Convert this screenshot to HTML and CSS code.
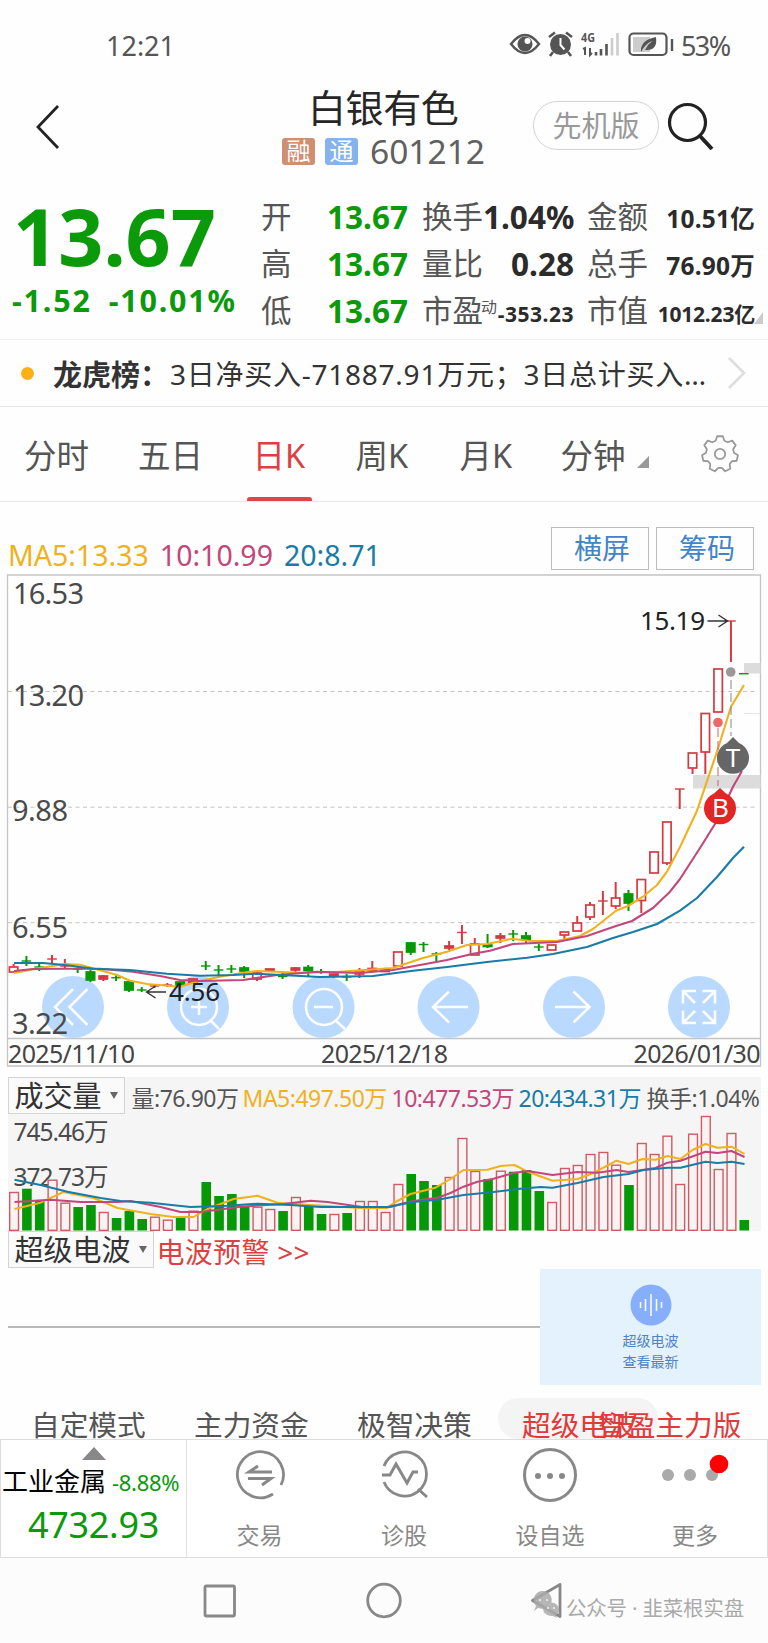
FILE: index.html
```html
<!DOCTYPE html>
<html lang="zh-CN">
<head>
    <meta charset="UTF-8">
    <meta name="viewport" content="width=device-width, initial-scale=1.0">
    <title>白银有色 601212</title>
    <link rel="stylesheet" href="styles.css">
</head>
<body>
    <div class="status">
        <span class="clock">12:21</span>
        <svg class="status-icons" width="166" height="28" viewBox="508 30 166 28">
            <path d="M511 44 Q525 26 539 44 Q525 62 511 44Z" fill="none" stroke="#555" stroke-width="2.4"/>
            <circle cx="525" cy="44" r="7.5" fill="#555"/><circle cx="527.5" cy="41" r="3" fill="#fff"/>
            <circle cx="560.500" cy="44.500" r="10.500" fill="#555"/>
            <path d="M549 37l6-4.500M572 37l-6-4.500M553 52l-3 4M568 52l3 4" stroke="#555" stroke-width="2.600" fill="none"/>
            <path d="M560.500 38v7l4 4.500" stroke="#fff" stroke-width="2" fill="none"/>
            <text x="581" y="42" font-size="13" font-weight="bold" fill="#555" textLength="14" lengthAdjust="spacingAndGlyphs">4G</text>
            <path d="M583 49l2-1v7M590 48v7l2-2" stroke="#555" stroke-width="2" fill="none"/>
            <path d="M596 52v3.500M601 49v6.500M606.500 44v11.500" stroke="#555" stroke-width="2.600"/>
            <path d="M612 38v17.500M617.500 33v22.500" stroke="#ccc" stroke-width="2.600"/>
            <rect x="629.500" y="33.500" width="37" height="21.500" rx="4" fill="#fff" stroke="#555" stroke-width="2.200"/>
            <path d="M633 37h17v15h-17z" fill="#ccc"/>
            <path d="M641 52q-1-12 15-15q2 14-11 13q3-6 7-9q-7 3-11 11z" fill="#555"/>
            <path d="M672 39v12" stroke="#555" stroke-width="2.400"/>
        </svg>
        <span class="battery">53%</span>
    </div>

    <div class="header">
        <svg class="back" width="26" height="46" viewBox="0 0 26 46"><path d="M23 2L3 23L23 44" fill="none" stroke="#222" stroke-width="2.800"/></svg>
        <div class="stock">
            <h1>白银有色</h1>
            <div class="code"><i class="tag rong">融</i><i class="tag tong">通</i><span>601212</span></div>
        </div>
        <div class="edition">先机版</div>
        <svg class="search" width="50" height="50" viewBox="0 0 50 50"><circle cx="20.500" cy="20.500" r="18" fill="none" stroke="#222" stroke-width="3.200"/><path d="M32.500 33.500L45 47" stroke="#222" stroke-width="4"/></svg>
    </div>

    <div class="quote">
        <div class="price">
            <div class="last">13.67</div>
            <div class="change"><span>-1.52</span><span>-10.01%</span></div>
        </div>
        <div class="pairs first">
            <div><span>开</span><b>13.67</b></div>
            <div><span>高</span><b>13.67</b></div>
            <div><span>低</span><b>13.67</b></div>
        </div>
        <div class="pairs second">
            <div><span>换手</span><b>1.04%</b></div>
            <div><span>量比</span><b>0.28</b></div>
            <div><span>市盈<sup>动</sup></span><b class="small">-353.23</b></div>
        </div>
        <div class="pairs third">
            <div><span>金额</span><b>10.51亿</b></div>
            <div><span>总手</span><b>76.90万</b></div>
            <div><span>市值</span><b class="small">1012.23亿</b></div>
        </div>
        <i class="corner"></i>
    </div>

    <div class="notice">
        <i class="dot"></i><b>龙虎榜：</b><span>3日净买入-71887.91万元；3日总计买入…</span>
        <svg width="20" height="34" viewBox="0 0 20 34"><path d="M2 2L17 17L2 32" fill="none" stroke="#ddd" stroke-width="2.600"/></svg>
    </div>

    <div class="tabs">
        <span>分时</span><span>五日</span><span class="active">日K</span><span>周K</span><span>月K</span><span class="minute">分钟<i></i></span>
        <svg width="40" height="40" viewBox="-20 -20 40 40"><path id="gear" fill="none" stroke="#999" stroke-width="1.800" stroke-linejoin="round"/><circle r="5.200" fill="none" stroke="#999" stroke-width="1.800"/></svg>
    </div>

    <div class="ma-row">
        <span class="ma5">MA5:13.33</span><span class="ma10">10:10.99</span><span class="ma20">20:8.71</span>
        <button>横屏</button><button>筹码</button>
    </div>

    <svg class="kline" id="kline" width="768" height="496" viewBox="0 574 768 496">
        <g fill="none" stroke="#c4c4c4">
            <path d="M7.500 575H760.500V1066H7.500ZM7.500 1038.500H760.500" stroke-width="1.300"/>
            <path d="M8 691.500H757M8 807.200H757M8 922.700H757" stroke-dasharray="4 3.500"/>
            <path d="M744 713.500H760" stroke="#e4e4e4"/>
        </g>
        <g fill="#dcdcdc"><rect x="744" y="663" width="16.500" height="10.500"/><rect x="693" y="775" width="67.500" height="13.500"/></g>
        <g fill="#b9d9fe"><circle cx="73" cy="1007" r="31"/><circle cx="198" cy="1007" r="31"/><circle cx="323.500" cy="1007" r="31"/><circle cx="448.500" cy="1007" r="31"/><circle cx="574" cy="1007" r="31"/><circle cx="699" cy="1007" r="31"/></g>
        <g fill="none" stroke="#fff" stroke-width="2.500">
            <path d="M73 989L55 1007L73 1025M87.500 989L69.500 1007L87.500 1025"/>
            <circle cx="199" cy="1007" r="18"/><path d="M191 1007h16M199 999v16M210 1020l9 9"/>
            <circle cx="324" cy="1007" r="18"/><path d="M314 1007h19M335 1020l10 9"/>
            <path d="M468 1007H433M449 991.500L433 1007L449 1022.500"/>
            <path d="M555 1007H590M573.500 991.500L589.500 1007L573.500 1022.500"/>
            <path d="M695 1003L683 991M683 1003.500V991H696M703 1003L715 991M702.500 991H715V1003.500M695 1011L683 1023M683 1010.500V1023H696M703 1011L715 1023M702.500 1023H715V1010.500"/>
        </g>
        <g id="candles"></g>
        <g id="kMa" fill="none" stroke-width="2.100" stroke-linejoin="round"></g>
        <g fill="#4a4a4a" font-size="29">
            <text x="13" y="604" textLength="71">16.53</text>
            <text x="13" y="706" textLength="71">13.20</text>
            <text x="12" y="821" textLength="56">9.88</text>
            <text x="12" y="938" textLength="56">6.55</text>
            <text x="12" y="1034" textLength="56">3.22</text>
        </g>
        <g fill="#444" font-size="25">
            <text x="8" y="1063" textLength="127">2025/11/10</text>
            <text x="321" y="1063" textLength="127">2025/12/18</text>
            <text x="633.500" y="1063" textLength="127">2026/01/30</text>
        </g>
        <g fill="#222" font-size="26">
            <text x="169" y="1001" textLength="51">4.56</text>
            <text x="640" y="630" textLength="65">15.19</text>
        </g>
        <path d="M166 992H146.500M155.500 986L146.500 992L155.500 998M707.500 621H727M718.500 615L727.500 621L718.500 627" fill="none" stroke="#333" stroke-width="1.400"/>
        <path d="M731 680V736" stroke="#888" stroke-dasharray="9 4"/>
        <path d="M718 728V786" stroke="#c66" stroke-dasharray="9 4"/>
        <circle cx="730.700" cy="672" r="4.800" fill="#999"/><circle cx="718" cy="722.500" r="4.800" fill="#ee6868"/>
        <path d="M733 737L739 743A16 16 0 1 1 727 743Z" fill="#666"/>
        <path d="M720 788L726 793.500A16 16 0 1 1 714 793.500Z" fill="#e22626"/>
        <g fill="#fff" font-size="26" text-anchor="middle"><text x="733" y="767">T</text><text x="720.500" y="817">B</text></g>
    </svg>

    <div class="volume">
        <div class="vol-head">
            <div class="select">成交量<i></i></div>
            <span class="v0">量:76.90万</span><span class="v1 ma5">MA5:497.50万</span><span class="v2 ma10">10:477.53万</span><span class="v3 ma20">20:434.31万</span><span class="v4">换手:1.04%</span>
        </div>
        <svg width="753" height="118" viewBox="7.500 1113 753 118">
            <g fill="#4a4a4a" font-size="24.500"><text x="13" y="1140.500" textLength="95">745.46万</text><text x="13" y="1186" textLength="95">372.73万</text></g>
            <g id="bars"></g>
            <g id="vMa" fill="none" stroke-width="2" stroke-linejoin="round"></g>
        </svg>
    </div>

    <div class="wave">
        <div class="wave-head"><div class="select">超级电波<i></i></div><span>电波预警 &gt;&gt;</span></div>
        <div class="wave-body">
            <div class="axis"></div>
            <div class="wave-card">
                <svg width="42" height="42" viewBox="-21 -21 42 42"><circle r="20.500" fill="#87aefb"/><path d="M-10.500-3V3M-5.500-6V6M0-11V11M5.500-6V6M10.500-3V3" stroke="#fff" stroke-width="1.500"/></svg>
                <span>超级电波</span><span>查看最新</span>
            </div>
        </div>
    </div>

    <div class="modes">
        <span>自定模式</span><span>主力资金</span><span>极智决策</span><span class="on">超级电波</span><span class="overlap">智盈主力版</span>
    </div>

    <div class="bottom">
        <div class="sector">
            <i></i>
            <div class="name">工业金属<span>-8.88%</span></div>
            <div class="value">4732.93</div>
        </div>
        <div class="item trade">
            <svg width="60" height="60" viewBox="-30 -30 60 60"><path d="M13 19A23 23 0 1 1 21 10" fill="none" stroke="#888" stroke-width="2.800"/><path d="M-2-9L-11-3H12M-12 3.500H11L2 10" fill="none" stroke="#888" stroke-width="3"/></svg>
            <span>交易</span>
        </div>
        <div class="item diagnose">
            <svg width="60" height="60" viewBox="-30 -30 60 60"><path d="M-20-9A22 22 0 1 1-20 7" fill="none" stroke="#888" stroke-width="2.800"/><path d="M-22 0H-14L-8-11L3 8L9-3H14M14 14L23 22" fill="none" stroke="#888" stroke-width="3"/></svg>
            <span>诊股</span>
        </div>
        <div class="item choose">
            <svg width="60" height="60" viewBox="-30 -30 60 60"><circle r="25.500" fill="none" stroke="#888" stroke-width="3"/><g fill="#888"><circle cx="-12" cy="1" r="3"/><circle cy="1" r="3"/><circle cx="12" cy="1" r="3"/></g></svg>
            <span>设自选</span>
        </div>
        <div class="item more">
            <svg width="70" height="60" viewBox="-35 -30 70 60"><g fill="#aaa"><circle cx="-27" r="6"/><circle cx="-5" r="6"/><circle cx="17" r="6"/></g><circle cx="24" cy="-11" r="9.300" fill="#f00"/></svg>
            <span>更多</span>
        </div>
    </div>

    <div class="navbar">
        <svg width="566" height="50" viewBox="0 1575 566 50">
            <g fill="none" stroke="#888" stroke-width="2.800" stroke-linejoin="round">
                <rect x="205" y="1586" width="29.500" height="30" rx="1.500"/>
                <circle cx="384" cy="1600.500" r="16.300"/>
                <path d="M560 1584.500L532.500 1600.500L560 1616.500Z"/>
            </g>
            <g fill="#aaa" opacity=".85">
                <path d="M534 1611l2-5a9 9 0 1 1 7 3l-5-1z"/><path d="M543 1609a8 7 0 1 1 13 6l1 3-4-2a9 7 0 0 1-10-7z"/>
            </g>
            <g fill="#eee"><circle cx="540" cy="1600" r="1.100"/><circle cx="547" cy="1600" r="1.100"/><circle cx="548" cy="1608" r="1.100"/><circle cx="554" cy="1608" r="1.100"/></g>
        </svg>
        <span>公众号 · 韭菜根实盘</span>
    </div>

    <script src="chart.js"></script>
</body>
</html>
```
FILE: styles.css
```css
* {
    box-sizing: border-box;
}
body {
    margin: 0;
    width: 768px;
    height: 1643px;
    overflow: hidden;
    background: #fefefe;
    color: #555;
    font-family: "Noto Sans", "Noto Sans CJK SC", sans-serif;
    white-space: nowrap;
}
i {
    font-style: normal;
}
svg {
    display: block;
    flex: none;
}
.ma5 { color: #efb21f; }
.ma10 { color: #c2477a; }
.ma20 { color: #187ca6; }

/* Barra de estado */
.status {
    display: flex;
    align-items: center;
    height: 92px;
    padding: 0 40px 0 106px;
    font-size: 27px;
    line-height: 92px;
}
.status-icons { margin-left: auto; margin-top: -4px; }
.battery { margin-left: 7px; width: 47px; letter-spacing: -1.6px; }

.header {
    display: flex;
    height: 92px;
    position: relative;
}
.back { margin: 12px 0 0 35px; }
.stock { width: 205px; margin-left: 240px; margin-top: -9px; }
.stock h1 {
    margin: 0 0 0 7px;
    font-size: 38px;
    font-weight: normal;
    line-height: 48px;
    color: #262626;
    letter-spacing: -0.4px;
}
.code {
    display: flex;
    align-items: center;
    height: 40px;
    margin-left: -19px;
    font-size: 33.5px;
    line-height: 40px;
    color: #606060;
}
.tag {
    width: 33px;
    height: 27px;
    margin-right: 10px;
    border-radius: 3px;
    color: #fff;
    font-size: 24px;
    line-height: 26px;
    text-align: center;
}
.code .tong { margin-right: 12px; }
.rong { background: #d08e72; }
.tong { background: #86b3ef; }
.edition {
    width: 126px;
    height: 49px;
    margin: 9px 8px 0 27px;
    border: 1.5px solid #d2d2d2;
    border-radius: 25px;
    color: #999;
    font-size: 29px;
    line-height: 48px;
    text-align: center;
}
.search { margin-top: 10px; }

/* Cotización */
.quote {
    display: flex;
    position: relative;
    height: 156px;
    border-bottom: 1px solid #eee;
}
.price { width: 261px; color: #0a9a0a; font-weight: bold; }
.last {
    height: 96px;
    padding-left: 13px;
    font-size: 79px;
    line-height: 104px;
}
.change {
    display: flex;
    gap: 17px;
    padding-left: 12px;
    font-size: 30.5px;
    line-height: 40px;
    letter-spacing: 1.8px;
}
.pairs { padding-top: 9px; }
.pairs div {
    display: flex;
    justify-content: space-between;
    height: 47.2px;
    line-height: 47.2px;
    font-size: 30.5px;
}
.pairs b { font-size: 31.5px; color: #2b2b2b; }
.first { width: 147px; }
.pairs.first b { color: #0a9a0a; }
.second { width: 152px; margin-left: 14px; }
.third { width: 168px; margin-left: 13px; }
.third b { font-size: 24.5px; line-height: 51px; letter-spacing: 0.2px; }
.pairs b.small { font-size: 21px; line-height: 54px; letter-spacing: -0.2px; }
.pairs.second b.small { letter-spacing: 0.5px; }
.pairs sup {
    display: inline-block;
    width: 0;
    margin-left: -2px;
    font-size: 16px;
    line-height: 16px;
    vertical-align: 9px;
}
.corner {
    position: absolute;
    right: 5px;
    bottom: 15px;
    border-left: 9px solid transparent;
    border-bottom: 12px solid #ccc;
}

.notice {
    display: flex;
    align-items: center;
    height: 67px;
    padding-left: 21px;
    border-bottom: 1px solid #e8e8e8;
    font-size: 28px;
    color: #333;
}
.notice b { width: 117px; font-size: 29px; }
.notice span { width: 557px; letter-spacing: 0.75px; }
.dot {
    width: 13px;
    height: 13px;
    margin: 0 19px 0 0;
    border-radius: 50%;
    background: #fbb014;
}

.tabs {
    display: grid;
    grid-template-columns: 114px 107.500px 110px 104px 101px 139.500px 40px;
    align-items: center;
    height: 95px;
    padding: 0 0 0 24px;
    border-bottom: 1px solid #e8e8e8;
    font-size: 32.5px;
    line-height: 98px;
}
.tabs span { height: 95px; }
.tabs svg { margin-top: -2px; }
.tabs .active { color: #dd4040; position: relative; padding-left: 7px; }
.tabs .active::after {
    content: "";
    position: absolute;
    left: 1px;
    bottom: 1px;
    width: 65px;
    height: 4px;
    border-radius: 3px 3px 0 0;
    background: #dd4646;
}
.minute i {
    display: inline-block;
    margin-left: 11px;
    border-left: 12px solid transparent;
    border-bottom: 12px solid #999;
}

.ma-row {
    display: flex;
    height: 72px;
    padding: 25px 14px 0 8px;
    font-size: 28.5px;
    line-height: 56px;
}
.ma-row span { margin-right: 11px; }
.ma-row button {
    width: 98px;
    height: 43px;
    margin-left: 7px;
    padding: 0 0 0 4px;
    border: 1px solid #bbb;
    background: none;
    color: #4284c8;
    font: 28px/41px "Noto Sans", "Noto Sans CJK SC", sans-serif;
}
.ma-row .ma20 { margin-right: auto; }

.kline { height: 496px; }

/* Volumen */
.volume {
    width: 753px;
    height: 154px;
    margin: 7px 0 0 7.5px;
    background: #f5f5f5;
}
.vol-head {
    display: flex;
    height: 36px;
    font-size: 23px;
    line-height: 43px;
    letter-spacing: -0.5px;
}
.vol-head > * { flex: none; }
.select {
    display: flex;
    align-items: center;
    gap: 8px;
    height: 37px;
    padding: 0 6px;
    border: 1.5px solid #d4d4d4;
    background: #fafafa;
    color: #333;
    font-size: 29px;
    line-height: 34px;
    letter-spacing: 0;
}
.select i {
    border: 4.5px solid transparent;
    border-top: 7px solid #666;
    border-bottom: 0;
}
.v0 { margin-left: 7px; width: 111px; }
.v1 { width: 149px; }
.v2 { width: 127px; }
.v3 { width: 128px; }

.wave { height: 154px; padding-left: 7.5px; }
.wave-head {
    display: flex;
    height: 38px;
    font-size: 28px;
    line-height: 43px;
    color: #dd4040;
}
.wave-head span { margin-left: 3px; letter-spacing: 0.3px; }
.wave-body { display: flex; height: 116px; }
.axis {
    width: 532.5px;
    height: 59px;
    border-bottom: 2px solid #b8b8b8;
}
.wave-card {
    display: flex;
    flex-direction: column;
    align-items: center;
    width: 221px;
    padding-top: 15px;
    background: #e4f2fd;
    color: #4c84c4;
    font-size: 14px;
    line-height: 21px;
}
.wave-card svg { margin-bottom: 4px; }

.modes {
    display: flex;
    position: relative;
    height: 54px;
    padding: 13px 0 0 31px;
    font-size: 28.7px;
    line-height: 54px;
    overflow: hidden;
}
.modes span { width: 163px; }
.modes .on {
    width: 160px;
    margin-left: -22px;
    padding-left: 24px;
    border-radius: 27px;
    background: #f4f4f4;
    color: #e03a3a;
}
.modes .overlap {
    position: absolute;
    left: 598px;
    color: #e03a3a;
}

/* Barra inferior */
.bottom {
    display: grid;
    grid-template-columns: 186px 145px 144px 148px 142px;
    grid-template-rows: 117px;
    height: 119px;
    border: 1px solid #ddd;
    background: #fff;
}
.sector {
    display: flex;
    flex-direction: column;
    align-items: center;
    padding-top: 7px;
    border-right: 1px solid #e2e2e2;
}
.sector i {
    border: 12px solid transparent;
    border-top: 0;
    border-bottom: 13px solid #888;
}
.name {
    align-self: flex-start;
    margin-left: 1px;
    color: #000;
    font-size: 26px;
    line-height: 43px;
}
.name span { color: #0a9a0a; font-size: 22px; margin-left: 6px; letter-spacing: -0.3px; }
.value {
    color: #0a9a0a;
    font-size: 36px;
    line-height: 42px;
    letter-spacing: -0.3px;
}
.item {
    display: flex;
    flex-direction: column;
    align-items: center;
    padding-top: 5px;
    color: #888;
    font-size: 23px;
    line-height: 60px;
}

.navbar {
    display: flex;
    height: 86px;
    padding-top: 17px;
    background: #fcfcfc;
    color: #aaa;
    font-size: 20.5px;
    line-height: 66px;
    letter-spacing: -0.2px;
}
```
FILE: chart.js
```js
const RED = '#d43a42', GREEN = '#079807';
const MA_COLORS = ['#efb21f', '#c2477a', '#187ca6'];
const X0 = 13.6, STEP = 12.81;

// tipo: r/g, cuerpo arriba, cuerpo abajo, mecha arriba, mecha abajo
const velas = [
    ['r',967,972,964,972],['g',961,961,956,966],['g',967,967,962,971],['r',959,959,955,964],['r',966,966,959,968],
    ['g',969,969,967,973],['g',972,980,970,982],['R',976,979,975,981],['g',977.7,977.7,975,981],['g',982,990,981,992],
    ['g',990,990,987,992],['r',986,986,985,988],['r',985,985,983,987],['g',982,985,982,985],['R',979,983,979,983],
    ['g',966,966,961,970],['g',970,970,965,975],['g',969,969,965,973],['g',968,971,966,978],['r',973,979,970,981],
    ['R',969,971,969,971],['g',976.5,976.5,973,979],['R',968,970,967,972],['g',967.5,970.5,965,976],['g',972,972,969,974],
    ['R',974,976,974,978],['g',977,977,974,981],['r',971,974,968,978],['R',968.5,970.5,961,971],['R',969.5,971.5,969,972],
    ['r',952,966,952,966],['g',943,952,942,955],['g',944.5,944.5,942,952],['g',954,954,952,961],['R',946,948,941,950],
    ['r',932.5,932.5,925,944],['r',944,955,938,955],['g',945,946.5,934,948],['R',936,938,933,943],['g',934,934,930,941],
    ['g',936,940,932,944],['g',947,947,944,951],['r',945,950,945,950],['r',932,935,932,939],['r',923,931,916,931],
    ['r',905,917,902,920],['r',901,901,891,915],['r',898,906,882,909],['g',894,903,890,911],['r',879.5,900.5,879.5,913],
    ['r',852,873,852,873],['r',822,863,822,865],['r',789,789,789,809],['r',753,768,753,774],['r',713.5,752,713.5,774],
    ['r',669,712,669,712],['r',621,621,621,662],['g',673.7,673.7,673.7,673.7]
];

const volumenes = [
    1192,1188.7,1200,1179.7,1202.7,1207,1205,1212,1218,1211,1219,1216.7,1219.7,1217.7,1210.7,1182,1196,1194,1206.7,1206.7,
    1209,1211,1197,1206,1214,1214,1213,1201,1201,1212,1184,1174,1181,1185,1177,1138,1171,1179,1170.7,1171.7,
    1170,1191,1202,1168,1165,1154,1152,1164.7,1185,1143,1154,1135.7,1184,1133.7,1116,1169,1133,1220
];

const lineasPrecio = [
    '14,973 40,968 65,964 80,964.7 92,968 117,975 130,980.7 147,984 180,986.7 200,980.7 220,976.7 240,973.3 257,971 300,972.7 333,972.3 393,968 423,958 447,951.7 467,945 487,944 512,938.7 530,941 557,941 580,936 593,929 616,910.7 628,906 643,896.7 657,885 667,871.7 680,847 697,810.7 717,751.7 731,706.7 744,685',
    '14,971 33,969 67,968.7 100,968.7 133,971.7 160,976 180,980 200,981 243,980 277,975 317,971.7 360,973 393,970 447,960 473,953.7 490,950.7 513,944 557,942 587,936 616,926 632,921 653,908 670,891.7 680,879 700,848 717,820.7 733,786.7 742,771',
    '14,963 43,963 67,965.3 93,968.7 130,970 167,973.7 200,975.7 233,975 257,973.7 320,977 373,976 413,970.7 447,967 487,962 527,957.7 553,954 587,947 613,938 633,932 657,924 680,910.7 697,898 717,877 733,858 744,846.7'
];

const lineasVolumen = [
    '14,1209 40,1202.7 63,1192 93,1198 117,1208 150,1214 173,1217 193,1217 207,1209 233,1199 257,1195.7 277,1202.7 310,1205 360,1208 387,1208 393,1203 410,1194 435,1187.7 450,1179 463,1170 487,1169.7 500,1166 514,1165 527,1171.7 552,1180.7 577,1179 593,1173 616,1160.7 628,1164 642,1159 655,1159.7 667,1156 680,1159 692,1150 705,1144 717,1147.7 731,1146.7 744,1154',
    '14,1202 50,1199.7 80,1202 117,1202 130,1201 160,1207 180,1212 200,1212 240,1206.7 283,1204 310,1200.7 327,1202 360,1206.7 390,1207 400,1204 413,1201 437,1197.7 450,1193 463,1186.7 477,1181.7 493,1178.7 513,1173 527,1171 552,1175 577,1172 597,1172.7 616,1170 628,1172 655,1168 667,1162.7 680,1160.7 705,1151.7 717,1153 731,1151 744,1157',
    '14,1179.7 40,1185 67,1191.7 100,1198 120,1201 150,1202.7 190,1207 227,1205.7 257,1203.7 290,1205 320,1207 387,1207 413,1202 437,1199.7 463,1195 493,1192 517,1189 540,1187 552,1187.7 577,1183 603,1177 628,1174 643,1170 667,1167.7 680,1167.7 705,1161.7 717,1163 731,1161.7 744,1164'
];

let htmlVelas = '', htmlBarras = '';
velas.forEach(([tipo, a, b, alto, bajo], i) => {
    const x = X0 + i * STEP;
    const color = tipo === 'g' ? GREEN : RED;
    if (a === b) {
        htmlVelas += `<path d="M${x - 4.8} ${a}H${x + 4.8}" stroke="${color}" stroke-width="1.4"/>`;
        htmlVelas += `<path d="M${x} ${alto}V${bajo}" stroke="${color}" stroke-width="2"/>`;
    } else {
        const relleno = tipo === 'r' ? 'none' : color;
        htmlVelas += `<path d="M${x} ${alto}V${a}M${x} ${b}V${bajo}" stroke="${color}" stroke-width="2"/>`;
        htmlVelas += `<rect x="${x - 4.2}" y="${a}" width="8.4" height="${b - a}" fill="${relleno}" stroke="${color}" stroke-width="1.7"/>`;
    }
    const y = volumenes[i];
    htmlBarras += tipo === 'g'
        ? `<rect x="${x - 4.8}" y="${y}" width="9.6" height="${1230.5 - y}" fill="${GREEN}"/>`
        : `<rect x="${x - 4.4}" y="${y + 0.5}" width="8.8" height="${1229.8 - y}" fill="#fbf3f3" stroke="#cf5c62" stroke-width="1.4"/>`;
});
document.getElementById('candles').innerHTML = htmlVelas;
document.getElementById('bars').innerHTML = htmlBarras;

function dibujarMedias(id, lineas) {
    document.getElementById(id).innerHTML = lineas.map((p, i) => `<polyline points="${p}" stroke="${MA_COLORS[i]}"/>`).join('');
}
dibujarMedias('kMa', lineasPrecio);
dibujarMedias('vMa', lineasVolumen);

// Engranaje de ajustes, 7 dientes
let d = '';
for (let i = 0; i < 7; i++) {
    [[-0.32, 14], [-0.16, 18], [0.16, 18], [0.32, 14]].forEach(([da, r]) => {
        const t = i * 2 * Math.PI / 7 - Math.PI / 2 + da;
        d += (d ? 'L' : 'M') + (r * Math.cos(t)).toFixed(2) + ' ' + (r * Math.sin(t)).toFixed(2);
    });
}
document.getElementById('gear').setAttribute('d', d + 'Z');
```
